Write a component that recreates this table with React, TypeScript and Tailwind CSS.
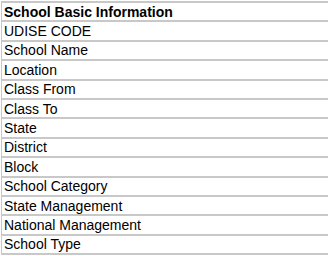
const rows = [
  'UDISE CODE',
  'School Name',
  'Location',
  'Class From',
  'Class To',
  'State',
  'District',
  'Block',
  'School Category',
  'State Management',
  'National Management',
  'School Type',
];

export default function App() {
  return (
    <div className="w-[328px] h-[256px] bg-white overflow-hidden font-['Liberation_Sans',Arial,sans-serif] text-[14px] text-black">
      <div className="ml-[1px] mt-[1px] border-l border-t-2 border-[#c8c8c8]">
        <div className="h-[19.4px] flex items-center px-[2px] font-bold border-b-2 border-[#c8c8c8] leading-none">
          School Basic Information
        </div>
        {rows.map((label) => (
          <div
            key={label}
            className="h-[19.4px] flex items-center px-[2px] border-b-2 border-[#c8c8c8] leading-none"
          >
            {label}
          </div>
        ))}
      </div>
    </div>
  );
}
